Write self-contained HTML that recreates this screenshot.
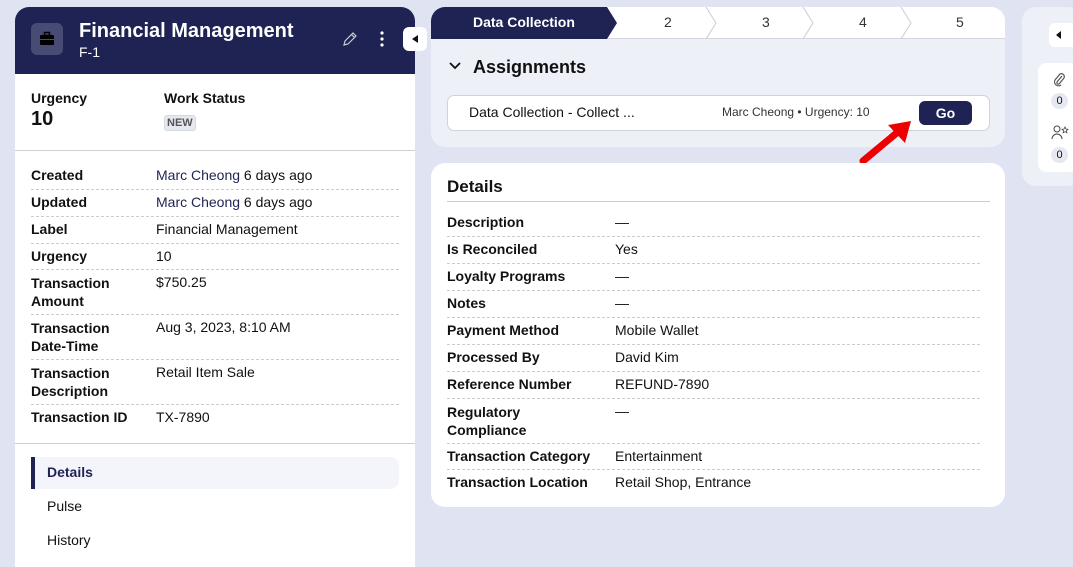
<!DOCTYPE html><html><head><style>
*{margin:0;padding:0;box-sizing:border-box}
body{width:1073px;height:558px;background:#e0e3f1;font-family:"Liberation Sans",sans-serif;font-size:14px;color:#111;position:relative;overflow:hidden}
.a{position:absolute;white-space:nowrap}
.b{font-weight:bold}
.dash{position:absolute;border-top:1px dashed #ccc;height:0}
</style></head><body>
<div class="a" style="left:15px;top:7px;width:400px;height:560px;background:#fff;border-radius:14px 14px 0 0;overflow:hidden">
<div style="height:67px;background:#1f2354"></div></div>
<div class="a" style="left:31px;top:23px;width:32px;height:32px;background:#484b73;border-radius:6px"></div>
<svg class="a" style="left:39px;top:31px" width="16" height="16" viewBox="0 0 16 16"><rect x="1" y="4" width="14" height="10" rx="1" fill="#000"/><rect x="5.5" y="1.5" width="5" height="3" fill="none" stroke="#000" stroke-width="1.5"/><rect x="1" y="8" width="14" height="1" fill="#484b73"/></svg>
<div class="a b" style="left:79px;top:20px;font-size:20px;color:#fff">Financial Management</div>
<div class="a" style="left:79px;top:44px;font-size:14px;color:#fff">F-1</div>
<svg class="a" style="left:342px;top:31px" width="16" height="16" viewBox="0 0 16 16"><path d="M2 14l1-4 8-8 3 3-8 8z M9.5 3.5l3 3" fill="none" stroke="#ccc" stroke-width="1.2"/></svg>
<svg class="a" style="left:379px;top:30px" width="6" height="18"><circle cx="3" cy="3" r="1.6" fill="#fff"/><circle cx="3" cy="9" r="1.6" fill="#fff"/><circle cx="3" cy="15" r="1.6" fill="#fff"/></svg>
<div class="a" style="left:403px;top:27px;width:24px;height:24px;background:#fff;border-radius:6px"></div>
<div class="a" style="left:412px;top:35px;border-right:6px solid #111;border-top:4px solid transparent;border-bottom:4px solid transparent"></div>
<div class="a b" style="left:31px;top:90px">Urgency</div>
<div class="a b" style="left:31px;top:108px;font-size:20px">10</div>
<div class="a b" style="left:164px;top:90px">Work Status</div>
<div class="a b" style="left:164px;top:115px;font-size:11px;background:#e6e9ef;border:1px solid #d4d8e0;color:#555;padding:1px 2px;border-radius:3px">NEW</div>
<div class="a" style="left:15px;top:150px;width:400px;border-top:1px solid #d0d0d0"></div>
<div class="a b" style="left:31px;top:167px">Created</div><div class="a" style="left:156px;top:167px"><span style="color:#1f2354">Marc Cheong</span> 6 days ago</div>
<div class="dash" style="left:31px;top:189px;width:368px"></div>
<div class="a b" style="left:31px;top:194px">Updated</div><div class="a" style="left:156px;top:194px"><span style="color:#1f2354">Marc Cheong</span> 6 days ago</div>
<div class="dash" style="left:31px;top:216px;width:368px"></div>
<div class="a b" style="left:31px;top:221px">Label</div><div class="a" style="left:156px;top:221px">Financial Management</div>
<div class="dash" style="left:31px;top:243px;width:368px"></div>
<div class="a b" style="left:31px;top:248px">Urgency</div><div class="a" style="left:156px;top:248px">10</div>
<div class="dash" style="left:31px;top:269px;width:368px"></div>
<div class="a b" style="left:31px;top:274px;line-height:18px">Transaction<br>Amount</div><div class="a" style="left:156px;top:274px">$750.25</div>
<div class="dash" style="left:31px;top:314px;width:368px"></div>
<div class="a b" style="left:31px;top:319px;line-height:18px">Transaction<br>Date-Time</div><div class="a" style="left:156px;top:319px">Aug 3, 2023, 8:10 AM</div>
<div class="dash" style="left:31px;top:359px;width:368px"></div>
<div class="a b" style="left:31px;top:364px;line-height:18px">Transaction<br>Description</div><div class="a" style="left:156px;top:364px">Retail Item Sale</div>
<div class="dash" style="left:31px;top:404px;width:368px"></div>
<div class="a b" style="left:31px;top:409px">Transaction ID</div><div class="a" style="left:156px;top:409px">TX-7890</div>
<div class="a" style="left:15px;top:443px;width:400px;border-top:1px solid #d0d0d0"></div>
<div class="a" style="left:31px;top:457px;width:368px;height:32px;background:#f4f5fb;border-radius:0 8px 8px 0;border-left:4px solid #1f2354"></div>
<div class="a b" style="left:47px;top:464px;color:#1f2354">Details</div>
<div class="a" style="left:47px;top:498px">Pulse</div>
<div class="a" style="left:47px;top:532px">History</div>

<div class="a" style="left:431px;top:7px;width:574px;height:140px;background:#eef0f8;border-radius:14px;overflow:hidden">
<div style="height:32px;background:#fff;border-bottom:1px solid #d4d6e0"></div></div>
<svg class="a" style="left:431px;top:7px" width="574" height="32"><path d="M14 0H176L186 16L176 32H0V14A14 14 0 0 1 14 0Z" fill="#1f2354"/><path d="M275 0L285 16L275 32M372 0L382 16L372 32M470 0L480 16L470 32" fill="none" stroke="#ccc"/></svg>
<div class="a b" style="left:473px;top:14px;color:#fff">Data Collection</div>
<div class="a" style="left:664px;top:14px;color:#333">2</div>
<div class="a" style="left:762px;top:14px;color:#333">3</div>
<div class="a" style="left:859px;top:14px;color:#333">4</div>
<div class="a" style="left:956px;top:14px;color:#333">5</div>
<svg class="a" style="left:448px;top:61px" width="14" height="10"><path d="M2 2l5 5 5-5" fill="none" stroke="#111" stroke-width="1.8"/></svg>
<div class="a b" style="left:473px;top:57px;font-size:18px">Assignments</div>
<div class="a" style="left:447px;top:95px;width:543px;height:36px;background:#fff;border:1px solid #d0d2dc;border-radius:7px"></div>
<div class="a" style="left:469px;top:104px">Data Collection - Collect ...</div>
<div class="a" style="left:722px;top:105px;font-size:12px;color:#333">Marc Cheong • Urgency: 10</div>
<div class="a b" style="left:919px;top:101px;width:53px;height:24px;background:#1f2354;color:#fff;border-radius:6px;text-align:center;line-height:24px">Go</div>
<svg class="a" style="left:855px;top:118px" width="60" height="50"><path d="M8 43L44 13" stroke="#e00" stroke-width="7" stroke-linecap="round"/><path d="M56 3L33 7L50 25Z" fill="#e00"/></svg>

<div class="a" style="left:431px;top:163px;width:574px;height:344px;background:#fff;border-radius:14px"></div>
<div class="a b" style="left:447px;top:177px;font-size:17px">Details</div>
<div class="a" style="left:447px;top:201px;width:543px;border-top:1px solid #ccc"></div>
<div class="a b" style="left:447px;top:214px">Description</div><div class="a" style="left:615px;top:214px">—</div>
<div class="dash" style="left:447px;top:236px;width:533px"></div>
<div class="a b" style="left:447px;top:241px">Is Reconciled</div><div class="a" style="left:615px;top:241px">Yes</div>
<div class="dash" style="left:447px;top:263px;width:533px"></div>
<div class="a b" style="left:447px;top:268px">Loyalty Programs</div><div class="a" style="left:615px;top:268px">—</div>
<div class="dash" style="left:447px;top:290px;width:533px"></div>
<div class="a b" style="left:447px;top:295px">Notes</div><div class="a" style="left:615px;top:295px">—</div>
<div class="dash" style="left:447px;top:317px;width:533px"></div>
<div class="a b" style="left:447px;top:322px">Payment Method</div><div class="a" style="left:615px;top:322px">Mobile Wallet</div>
<div class="dash" style="left:447px;top:344px;width:533px"></div>
<div class="a b" style="left:447px;top:349px">Processed By</div><div class="a" style="left:615px;top:349px">David Kim</div>
<div class="dash" style="left:447px;top:371px;width:533px"></div>
<div class="a b" style="left:447px;top:376px">Reference Number</div><div class="a" style="left:615px;top:376px">REFUND-7890</div>
<div class="dash" style="left:447px;top:398px;width:533px"></div>
<div class="a b" style="left:447px;top:403px;line-height:18px">Regulatory<br>Compliance</div><div class="a" style="left:615px;top:403px">—</div>
<div class="dash" style="left:447px;top:443px;width:533px"></div>
<div class="a b" style="left:447px;top:448px">Transaction Category</div><div class="a" style="left:615px;top:448px">Entertainment</div>
<div class="dash" style="left:447px;top:469px;width:533px"></div>
<div class="a b" style="left:447px;top:474px">Transaction Location</div><div class="a" style="left:615px;top:474px">Retail Shop, Entrance</div>

<div class="a" style="left:1022px;top:7px;width:60px;height:179px;background:#eef0f8;border-radius:14px"></div>
<div class="a" style="left:1049px;top:23px;width:30px;height:24px;background:#fff;border-radius:6px"></div>
<div class="a" style="left:1056px;top:31px;border-right:5px solid #111;border-top:4px solid transparent;border-bottom:4px solid transparent"></div>
<div class="a" style="left:1038px;top:63px;width:40px;height:109px;background:#fff;border-radius:8px"></div>
<svg class="a" style="left:1052px;top:72px" width="14" height="16"><path d="M10 4L5 10a1.5 1.5 0 0 0 2 2L12 6a3 3 0 0 0-4-4L3 8a4 4 0 0 0 6 5" fill="none" stroke="#555" stroke-width="1.2"/></svg>
<div class="a" style="left:1051px;top:93px;width:17px;height:16px;background:#e6e9f2;border-radius:8px;font-size:11px;text-align:center;line-height:16px">0</div>
<svg class="a" style="left:1051px;top:125px" width="18" height="16"><circle cx="6" cy="4" r="3" fill="none" stroke="#444"/><path d="M1 14a5 5 0 0 1 10 0" fill="none" stroke="#444"/><path d="M14 2l1 2 2 .3-1.5 1.4.4 2-1.9-1-1.9 1 .4-2L11 4.3l2-.3z" fill="none" stroke="#444" stroke-width=".8"/></svg>
<div class="a" style="left:1051px;top:147px;width:17px;height:16px;background:#e6e9f2;border-radius:8px;font-size:11px;text-align:center;line-height:16px">0</div>
</body></html>
